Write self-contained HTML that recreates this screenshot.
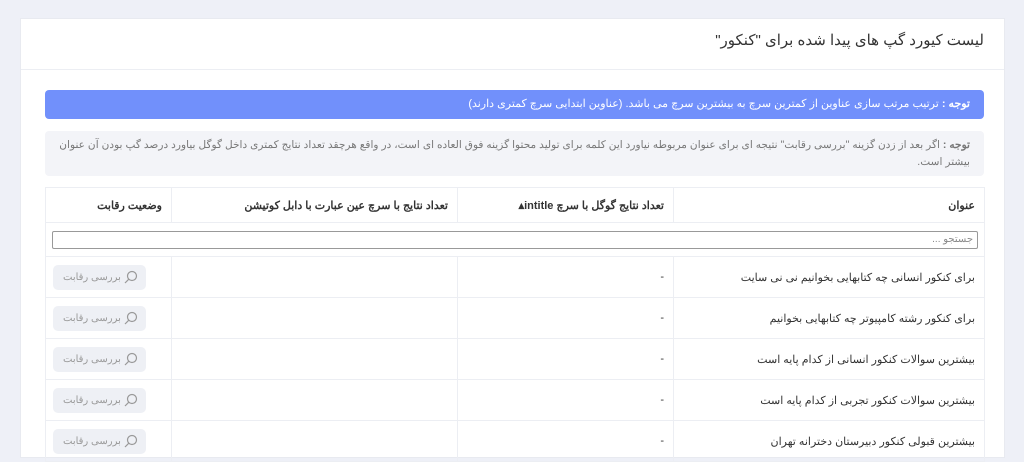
<!DOCTYPE html>
<html dir="rtl"><head><meta charset="utf-8"><style>
body{margin:0;width:1024px;height:447px;overflow:hidden;background:#eef0f7;font-family:"Liberation Sans","Noto Sans CJK SC",sans-serif;color:#333;}
.card{position:absolute;left:20px;top:18px;width:985px;height:440px;background:#fff;border:1px solid #e8eaf0;box-sizing:border-box}
.title{position:absolute;right:20px;top:12px;font-size:15px;color:#333}
.hr{position:absolute;left:0;right:0;top:50px;border-top:1px solid #eceef3}
.a1{position:absolute;left:24px;width:939px;top:71px;height:29px;background:#7190fb;border-radius:4px;color:#fff;font-size:11px;line-height:29px;padding-right:14px;box-sizing:border-box}
.a2{position:absolute;left:24px;width:939px;top:112px;height:45px;background:#f3f4f8;border-radius:4px;color:#777;font-size:10.6px;line-height:17px;padding:6px 14px 0 8px;box-sizing:border-box}
b{font-weight:bold}
table{position:absolute;left:24px;top:168px;width:940px;border-collapse:collapse;font-size:11px}
td,th{border:1px solid #eceef3;padding:0 9px;text-align:right;height:40px}
th{height:34px;font-weight:bold;color:#333}
.s td{height:33px;padding:0 6px}
.s div{border:1px solid #999;height:16px;font-size:10px;color:#888;line-height:16px;padding-right:4px;border-radius:2px}
td.c{text-align:left;padding-left:7px}
.btn{display:inline-flex;align-items:center;gap:3px;background:#eef0f5;color:#999;border-radius:5px;padding:0 8px 0 10px;height:25px;font-size:10px;direction:rtl}
</style></head><body>
<div class="card">
<div class="title">لیست کیورد گپ های پیدا شده برای "کنکور"</div>
<div class="hr"></div>
<div class="a1"><b>توجه :</b> ترتیب مرتب سازی عناوین از کمترین سرچ به بیشترین سرچ می باشد. (عناوین ابتدایی سرچ کمتری دارند)</div>
<div class="a2"><b>توجه :</b> اگر بعد از زدن گزینه "بررسی رقابت" نتیجه ای برای عنوان مربوطه نیاورد این کلمه برای تولید محتوا گزینه فوق العاده ای است، در واقع هرچقد تعداد نتایج کمتری داخل گوگل بیاورد درصد گپ بودن آن عنوان بیشتر است.</div>
<table>
<tr><th style="width:292px">عنوان</th><th style="width:197px">تعداد نتایج گوگل با سرچ intitle▴</th><th style="width:267px">تعداد نتایج با سرچ عین عبارت با دابل کوتیشن</th><th>وضعیت رقابت</th></tr>
<tr class="s"><td colspan="4"><div>جستجو ...</div></td></tr>
<tr><td>برای کنکور انسانی چه کتابهایی بخوانیم نی نی سایت</td><td>-</td><td></td><td class="c"><span class="btn"><svg width="14" height="14" viewBox="0 0 14 14"><circle cx="8" cy="6" r="4.5" fill="none" stroke="#999" stroke-width="1.2"/><line x1="4.8" y1="9.2" x2="1" y2="13" stroke="#999" stroke-width="1.2"/></svg>بررسی رقابت</span></td></tr>
<tr><td>برای کنکور رشته کامپیوتر چه کتابهایی بخوانیم</td><td>-</td><td></td><td class="c"><span class="btn"><svg width="14" height="14" viewBox="0 0 14 14"><circle cx="8" cy="6" r="4.5" fill="none" stroke="#999" stroke-width="1.2"/><line x1="4.8" y1="9.2" x2="1" y2="13" stroke="#999" stroke-width="1.2"/></svg>بررسی رقابت</span></td></tr>
<tr><td>بیشترین سوالات کنکور انسانی از کدام پایه است</td><td>-</td><td></td><td class="c"><span class="btn"><svg width="14" height="14" viewBox="0 0 14 14"><circle cx="8" cy="6" r="4.5" fill="none" stroke="#999" stroke-width="1.2"/><line x1="4.8" y1="9.2" x2="1" y2="13" stroke="#999" stroke-width="1.2"/></svg>بررسی رقابت</span></td></tr>
<tr><td>بیشترین سوالات کنکور تجربی از کدام پایه است</td><td>-</td><td></td><td class="c"><span class="btn"><svg width="14" height="14" viewBox="0 0 14 14"><circle cx="8" cy="6" r="4.5" fill="none" stroke="#999" stroke-width="1.2"/><line x1="4.8" y1="9.2" x2="1" y2="13" stroke="#999" stroke-width="1.2"/></svg>بررسی رقابت</span></td></tr>
<tr><td>بیشترین قبولی کنکور دبیرستان دخترانه تهران</td><td>-</td><td></td><td class="c"><span class="btn"><svg width="14" height="14" viewBox="0 0 14 14"><circle cx="8" cy="6" r="4.5" fill="none" stroke="#999" stroke-width="1.2"/><line x1="4.8" y1="9.2" x2="1" y2="13" stroke="#999" stroke-width="1.2"/></svg>بررسی رقابت</span></td></tr>
</table>
</div>
</body></html>
